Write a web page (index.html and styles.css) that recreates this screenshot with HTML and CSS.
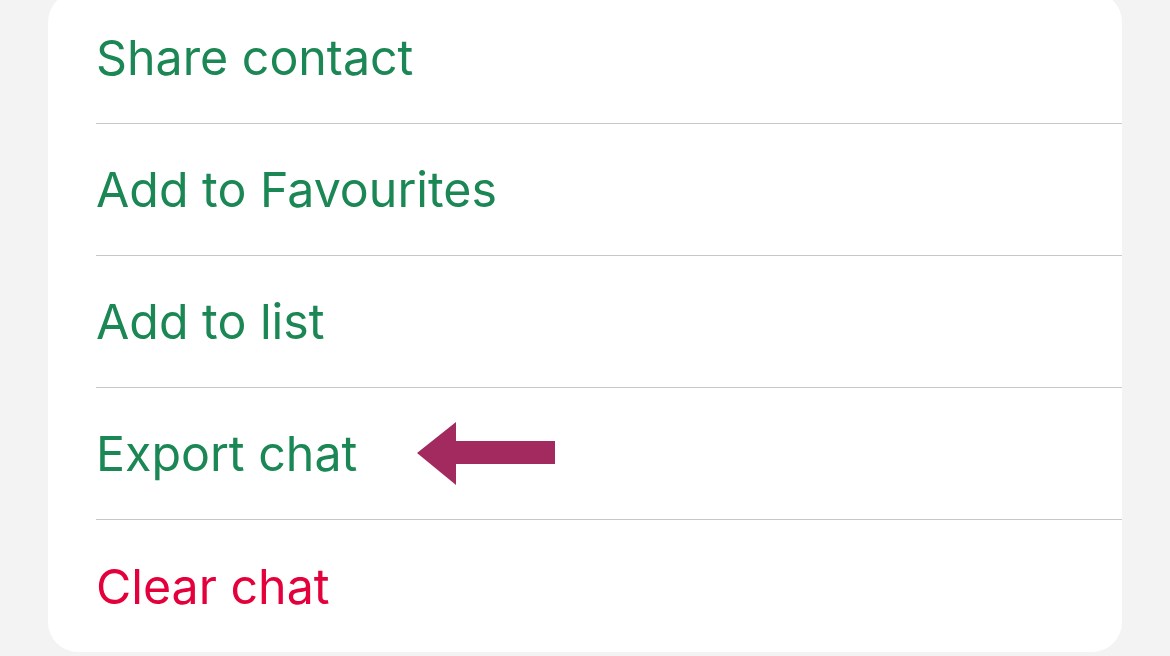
FILE: index.html
```html
<!DOCTYPE html>
<html lang="en">
<head>
  <meta charset="UTF-8">
  <title>Chat options</title>
  <link rel="stylesheet" href="styles.css">
</head>
<body>

  <div class="sheet">
    <ul class="menu">
      <li class="menu-item">Share contact</li>
      <li class="menu-item">Add to Favourites</li>
      <li class="menu-item">Add to list</li>
      <li class="menu-item">
        Export chat
        <svg class="pointer" width="140" height="64" viewBox="0 0 140 64" aria-hidden="true">
          <polygon points="0,31 39,0 39,19 138,19 138,42 39,42 39,63" fill="#a22a5e"/>
        </svg>
      </li>
      <li class="menu-item danger">Clear chat</li>
    </ul>
  </div>

</body>
</html>
```

FILE: styles.css
```css
body {
  font-family: Inter, "Noto Sans", sans-serif;
  background: #f3f3f3;
  margin: 0;
  padding: 0;
  height: 656px;
  overflow: hidden;
}

.sheet {
  background: #fff;
  margin: -8px 48px 0 48px;
  border-radius: 30px;
  padding-left: 48px;
}

.menu {
  list-style: none;
  margin: 0;
  padding: 0;
}

.menu-item {
  height: 132px;
  box-sizing: border-box;
  padding-top: 0;
  display: flex;
  align-items: center;
  gap: 60px;
  border-bottom: 1px solid #c8c8c8;
  color: #1b8754;
  font-size: 48.3px;
}

.menu-item:last-child {
  border-bottom: none;
}

.danger {
  color: #e4003b;
}

.pointer {
  flex: none;
  margin-top: 1px;
}
```
